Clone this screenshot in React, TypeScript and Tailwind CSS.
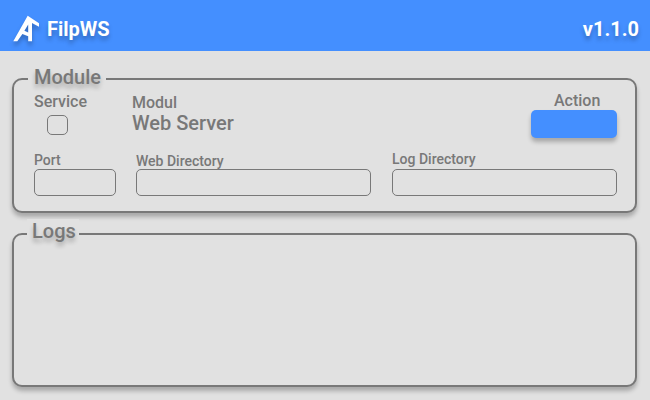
import type { ReactNode } from "react";

function Logo() {
  return (
    <svg
      width="28"
      height="28"
      viewBox="0 0 28 28"
      className="shrink-0 overflow-visible drop-shadow-[0_4px_2px_rgba(0,0,0,0.25)]"
      fill="#fff"
      fillRule="evenodd"
    >
      <path d="M1.3 26.2 15.7 0.8 27 8.2V11.8L20 8V26.2H16.2V21.3L10.4 19 5.3 26.2ZM12.4 15.8 16.2 17.6V9.4Z" />
    </svg>
  );
}

function Panel({ title, className, legendClass, children }: { title: string; className: string; legendClass: string; children?: ReactNode }) {
  return (
    <section className={`rounded-[10px] border-2 border-[#787878] bg-[#e1e1e1] shadow-[0_4px_4px_rgba(0,0,0,0.25)] ${className}`}>
      <h2 className={`h-[24px] w-fit bg-[#e1e1e1] text-[20px] leading-[24px] font-medium [text-shadow:0_4px_4px_rgba(0,0,0,0.25)] ${legendClass}`}>
        {title}
      </h2>
      {children}
    </section>
  );
}

function Field({ label, className, labelClass = "" }: { label: string; className: string; labelClass?: string }) {
  return (
    <label className={`flex flex-col ${className}`}>
      <span className={`h-4 text-[14px] leading-4 whitespace-nowrap ${labelClass}`}>{label}</span>
      <input className="mt-[1px] h-[27px] w-full rounded-[5px] border border-[#787878] bg-transparent px-2 outline-none" />
    </label>
  );
}

export default function App() {
  return (
    <div className="h-[400px] w-[650px] overflow-hidden bg-[#e1e1e1] font-['Roboto',sans-serif] font-medium text-[#787878]">
      <header className="flex h-[51px] items-center justify-between bg-[#448fff] pr-[11px] pl-3 text-[20px] font-bold text-white [text-shadow:0_4px_4px_rgba(0,0,0,0.25)]">
        <div className="flex items-center gap-[7px] pt-[7px]">
          <Logo />
          <h1 className="leading-6">FilpWS</h1>
        </div>
        <span className="pt-[7px] leading-6">v1.1.0</span>
      </header>

      <main className="flex flex-col gap-[20px] pt-[27px] pr-[13px] pl-3">
        <Panel title="Module" className="h-[135px]" legendClass="-mt-[15px] ml-[14px] pr-[5px] pl-[6px]">
          <div className="flex h-[60px] pr-[18px] pl-5">
            <div className="flex w-[98px] flex-col pt-[3px]">
              <span className="text-[16px] leading-[19px]">Service</span>
              <button className="mt-[4px] ml-[13px] h-5 w-[21px] rounded-[5px] border border-[#787878]" aria-label="Service" />
            </div>
            <div className="flex flex-col pt-[4px]">
              <span className="text-[16px] leading-[19px]">Modul</span>
              <span className="text-[20px] leading-[23px]">Web Server</span>
            </div>
            <div className="ml-auto flex w-[86px] flex-col pt-[2px]">
              <span className="pl-[23px] text-[16px] leading-[19px]">Action</span>
              <button className="h-7 rounded-[5px] bg-[#448fff] shadow-[0_4px_4px_rgba(0,0,0,0.25)]" aria-label="Action" />
            </div>
          </div>
          <div className="flex pt-[3px] pr-[18px] pl-5">
            <Field label="Port" className="w-[82px]" />
            <Field label="Web Directory" className="ml-5 w-[235px]" labelClass="translate-y-px" />
            <Field label="Log Directory" className="ml-[21px] w-[225px]" labelClass="-translate-y-px" />
          </div>
        </Panel>
        <Panel title="Logs" className="h-[154px]" legendClass="-mt-[16px] ml-[13px] pr-[3px] pl-[5px]" />
      </main>
    </div>
  );
}
